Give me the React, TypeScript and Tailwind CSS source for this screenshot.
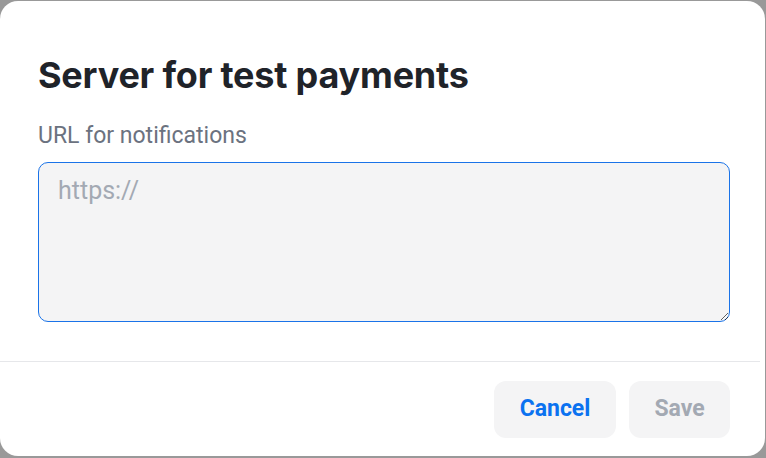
import React from "react"

const App: React.FC = () => {
  return (
    <div className="h-[458px] w-[766px] overflow-hidden bg-[#999999] pt-[1px]">
      <div className="flex h-[455px] w-[765px] flex-col rounded-[18px] bg-white font-['Roboto',sans-serif]">
        <div className="flex flex-col px-[38px] pt-[52px]">
          <h1 className="font-['Inter',sans-serif] text-[36px] font-bold leading-[44px] tracking-[-0.2px] text-[#1f2329]">
            Server for test payments
          </h1>
          <label className="mt-[25px] text-[23px] leading-[28px] text-[#6b7280]">
            URL for notifications
          </label>
          <textarea
            placeholder="https://"
            className="mt-[12px] h-[160px] w-[692px] resize-y rounded-[10px] border border-[#1a73e8] bg-[#f4f4f5] px-[19px] py-[14px] text-[25px] leading-[28px] text-[#1f2329] placeholder:text-[#a3a9b3] outline-none"
          />
        </div>
        <div className="mt-[39px] h-px w-[760px] bg-[#e6e7ea]" />
        <div className="flex justify-end gap-[13px] pr-[35px] pt-[19px]">
          <button className="h-[57px] w-[122px] rounded-[12px] bg-[#f4f4f5] text-[23px] font-bold text-[#0b72f0]">
            Cancel
          </button>
          <button className="h-[57px] w-[101px] rounded-[12px] bg-[#f4f4f5] text-[23px] font-bold text-[#a3a9b3]">
            Save
          </button>
        </div>
      </div>
    </div>
  )
}

export default App
